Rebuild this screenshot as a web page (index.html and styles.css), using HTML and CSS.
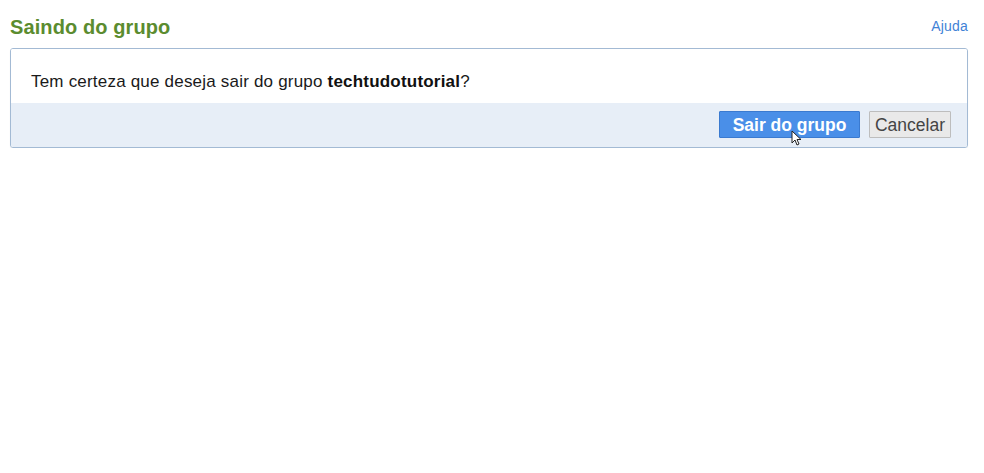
FILE: index.html
```html
<!DOCTYPE html>
<html lang="pt">
<head>
<meta charset="utf-8">
<title>Saindo do grupo</title>
<link rel="stylesheet" href="styles.css">
</head>
<body>
<div class="page">
  <div class="header">
    <h1 class="title">Saindo do grupo</h1>
    <a class="help" href="#">Ajuda</a>
  </div>
  <div class="dialog">
    <div class="message">Tem certeza que deseja sair do grupo <b>techtudotutorial</b>?</div>
    <div class="actions">
      <button class="btn btn-primary">Sair do grupo
        <svg class="cursor" width="11" height="16" viewBox="0 0 11 16"><path d="M1 1 L1 13 L4 10 L6 15 L8 14 L6 9.5 L10 9.5 Z" fill="#fff" stroke="#222" stroke-width="1"/></svg>
      </button>
      <button class="btn btn-secondary">Cancelar</button>
    </div>
  </div>
</div>
</body>
</html>
```
FILE: styles.css
```css
html, body {
  margin: 0;
  padding: 0;
  background: #ffffff;
}
body {
  font-family: Arial, "Liberation Sans", sans-serif;
  color: #222;
}
.page {
  padding: 0 16px 0 10px;
}
.header {
  display: flex;
  justify-content: space-between;
  align-items: flex-end;
  height: 38px;
}
.title {
  margin: 0;
  font-size: 20px;
  letter-spacing: 0.1px;
  font-weight: bold;
  color: #5b8c2f;
  line-height: 22px;
}
.help {
  font-size: 14px;
  letter-spacing: 0.2px;
  color: #3f82d6;
  text-decoration: none;
  line-height: 16px;
  padding-bottom: 4px;
}
.dialog {
  margin-top: 10px;
  border: 1px solid #a3bad4;
  border-radius: 3px;
  overflow: hidden;
  box-shadow: 0 1px 1px rgba(0,0,0,0.08);
}
.message {
  background: #fff;
  height: 54px;
  line-height: 66px;
  padding-left: 20px;
  font-size: 17px;
  letter-spacing: 0.2px;
  color: #1a1a1a;
  box-sizing: border-box;
}
.message b { color: #111; }
.actions {
  background: #e7eef7;
  height: 44px;
  display: flex;
  justify-content: flex-end;
  align-items: flex-start;
  gap: 9px;
  padding: 8px 16px 0 0;
  box-sizing: border-box;
}
.btn {
  height: 27px;
  font-family: Arial, "Liberation Sans", sans-serif;
  font-size: 17.5px;
  border-radius: 1px;
  padding: 2px 0 0 0;
  margin: 0;
  position: relative;
}
.btn-primary {
  width: 141px;
  background: #4a8fe8;
  border: 1px solid #3a7ad0;
  color: #fff;
  font-weight: bold;
}
.btn-secondary {
  width: 82px;
  background: #e9e9e9;
  border: 1px solid #bdbdbd;
  color: #444;
}
.cursor {
  position: absolute;
  left: 71px;
  top: 18px;
}
```
